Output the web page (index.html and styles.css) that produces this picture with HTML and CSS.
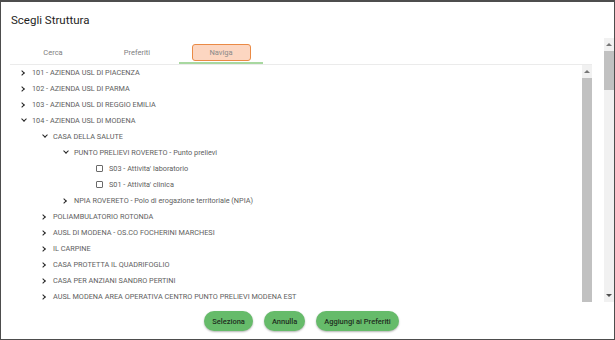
FILE: index.html
```html
<!DOCTYPE html>
<html lang="it">
<head>
    <meta charset="UTF-8">
    <title>Scegli Struttura</title>
    <link rel="stylesheet" href="styles.css">
</head>
<body>
    <div class="dialog">
        <h2 class="title">Scegli Struttura</h2>

        <div class="body">
            <div class="content">
                <div class="tabs">
                    <div class="tab">Cerca</div>
                    <div class="tab">Preferiti</div>
                    <div class="tab active"><span class="tab-pill">Naviga</span></div>
                </div>

                <div class="tree-box">
                    <ul class="tree">
                        <li class="node lv0"><span class="tog right"></span>101 - AZIENDA USL DI PIACENZA</li>
                        <li class="node lv0"><span class="tog right"></span>102 - AZIENDA USL DI PARMA</li>
                        <li class="node lv0"><span class="tog right"></span>103 - AZIENDA USL DI REGGIO EMILIA</li>
                        <li class="node lv0"><span class="tog down"></span>104 - AZIENDA USL DI MODENA</li>
                        <li class="node lv1"><span class="tog down"></span>CASA DELLA SALUTE</li>
                        <li class="node lv2"><span class="tog down"></span>PUNTO PRELIEVI ROVERETO - Punto prelievi</li>
                        <li class="node lv3 leaf"><span class="check"></span>S03 - Attivita' laboratorio</li>
                        <li class="node lv3 leaf"><span class="check"></span>S01 - Attivita' clinica</li>
                        <li class="node lv2"><span class="tog right"></span>NPIA ROVERETO - Polo di erogazione territoriale (NPIA)</li>
                        <li class="node lv1"><span class="tog right"></span>POLIAMBULATORIO ROTONDA</li>
                        <li class="node lv1"><span class="tog right"></span>AUSL DI MODENA - OS.CO FOCHERINI MARCHESI</li>
                        <li class="node lv1"><span class="tog right"></span>IL CARPINE</li>
                        <li class="node lv1"><span class="tog right"></span>CASA PROTETTA IL QUADRIFOGLIO</li>
                        <li class="node lv1"><span class="tog right"></span>CASA PER ANZIANI SANDRO PERTINI</li>
                        <li class="node lv1"><span class="tog right"></span>AUSL MODENA AREA OPERATIVA CENTRO PUNTO PRELIEVI MODENA EST</li>
                    </ul>
                    <!-- inner scrollbar (tree list) -->
                    <div class="scrollbar inner">
                        <span class="arrow up"></span>
                        <span class="thumb"></span>
                    </div>
                </div>
            </div>

            <!-- outer scrollbar (dialog content) -->
            <div class="scrollbar outer">
                <span class="arrow up"></span>
                <span class="thumb"></span>
                <span class="spacer"></span>
                <span class="arrow down"></span>
            </div>
        </div>

        <div class="actions">
            <button class="btn">Seleziona</button>
            <button class="btn">Annulla</button>
            <button class="btn">Aggiungi ai Preferiti</button>
        </div>
    </div>
</body>
</html>
```

FILE: styles.css
```css
* {
    box-sizing: border-box;
}
body {
    margin: 0;
    font-family: Roboto, "Liberation Sans", sans-serif;
    background-color: white;
}
.dialog {
    width: 615px;
    height: 340px;
    border: 1px solid #4d4d4d;
    border-top-width: 2px;
    display: flex;
    flex-direction: column;
    overflow: hidden;
}
.title {
    margin: 0;
    height: 36px;
    padding: 11px 0 0 10px;
    font-size: 11.5px;
    font-weight: 400;
    color: #1e1e1e;
}
.body {
    height: 264px;
    display: flex;
}
.content {
    flex: 1;
    padding: 0 12px 0 9px;
    overflow: hidden;
}

/* tabs */
.tabs {
    display: flex;
    height: 26px;
    padding-left: 1px;
}
.tab {
    width: 84px;
    display: flex;
    align-items: center;
    justify-content: center;
    font-size: 7.5px;
    color: #808080;
    padding-top: 3px;
}
.tab.active {
    border-bottom: 2px solid #a8d8a0;
    padding-top: 5px;
}
.tab-pill {
    width: 59px;
    height: 17px;
    display: flex;
    align-items: center;
    justify-content: center;
    background-color: #fcd6c1;
    border: 1px solid #ea8a45;
    border-radius: 3px;
    color: #8a8a8a;
}

/* tree */
.tree-box {
    display: flex;
    height: 240px;
    border-top: 1px solid #ebebeb;
}
.tree {
    flex: 1;
    list-style: none;
    margin: 0;
    padding: 0;
    overflow: hidden;
}
.node {
    height: 16px;
    display: flex;
    align-items: center;
    font-size: 7.3px;
    color: #5e5e5e;
    white-space: nowrap;
    padding-bottom: 1px;
}
.lv0 { padding-left: 10px; }
.lv1 { padding-left: 31px; }
.lv2 { padding-left: 52px; }
.lv3 { padding-left: 86px; }

.tog {
    width: 7px;
    height: 7px;
    margin-right: 5px;
    position: relative;
}
.tog::before {
    content: "";
    position: absolute;
    width: 3px;
    height: 3px;
    border-right: 1.5px solid #222;
    border-bottom: 1.5px solid #222;
}
.tog.right::before {
    left: 0;
    top: 1.5px;
    transform: rotate(-45deg);
}
.tog.down::before {
    left: 1.5px;
    top: 0;
    transform: rotate(45deg);
}
.check {
    width: 7px;
    height: 7px;
    border: 1px solid #6a6a6a;
    border-radius: 1px;
    margin-right: 6px;
}

/* fake scrollbars */
.scrollbar {
    width: 10px;
    background-color: #f1f1f1;
    display: flex;
    flex-direction: column;
}
.scrollbar .arrow {
    height: 13px;
    position: relative;
}
.scrollbar .arrow::before {
    content: "";
    position: absolute;
    left: 2px;
    top: 5px;
    border-left: 3px solid transparent;
    border-right: 3px solid transparent;
}
.arrow.up::before {
    border-bottom: 3px solid #777;
}
.arrow.down::before {
    border-top: 3px solid #505050;
}
.scrollbar .thumb {
    background-color: #c1c1c1;
}
.scrollbar.inner .thumb {
    flex: 1;
}
.scrollbar.outer .thumb {
    height: 39px;
}
.scrollbar .spacer {
    flex: 1;
}

/* footer */
.actions {
    flex: 1;
    display: flex;
    justify-content: center;
    align-items: flex-start;
    gap: 11px;
    padding-top: 9px;
    padding-right: 12px;
}
.btn {
    height: 20px;
    min-width: 41px;
    padding: 0 8px;
    border: none;
    border-radius: 10px;
    background-color: #66bb6a;
    box-shadow: 0 1px 2px rgba(0, 0, 0, 0.3);
    font-family: Roboto, "Liberation Sans", sans-serif;
    font-size: 7.5px;
    font-weight: 500;
    color: #1f2f1f;
}
```
